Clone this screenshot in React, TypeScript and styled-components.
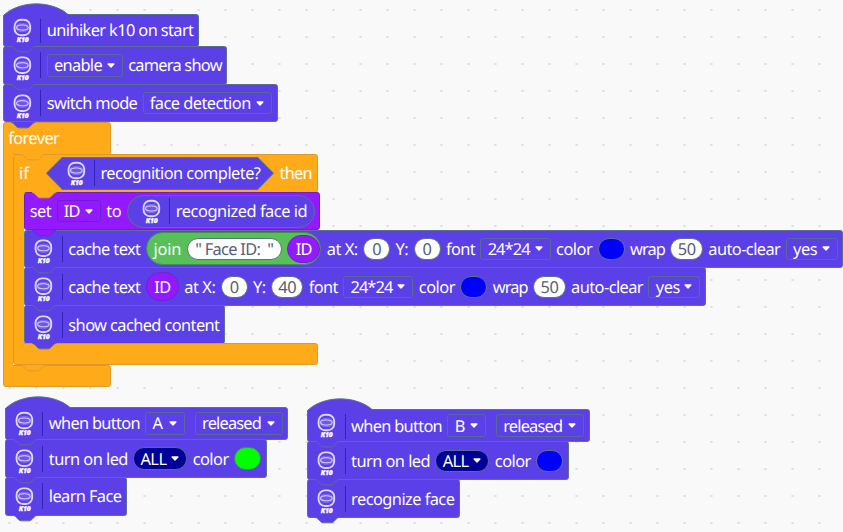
import React, { useLayoutEffect, useRef, useState } from "react";
import styled, { createGlobalStyle } from "styled-components";

const BLUE = "#5b40e8";
const BLUE_LINE = "#5c6f8f";
const ORANGE = "#ffab19";
const ORANGE_LINE = "#dd9a2c";
const PURPLE = "#931aff";
const PURPLE_LINE = "#6d22c9";

const GlobalStyle = createGlobalStyle`
  body { margin: 0; background: #f9f9f9; overflow: hidden; }
`;

const Workspace = styled.main`
  position: relative;
  width: 843px;
  height: 532px;
  overflow: hidden;
  font: 16.4px/22px "Noto Sans", "Open Sans", sans-serif;
  text-rendering: geometricPrecision;
  color: #fff;
  background-color: #f9f9f9;
  background-size: 27px 27px;
  background-image: radial-gradient(circle at 9.5px 10px, #dedede 0.9px, transparent 1.4px);
`;

const Stack = styled.section<{ $x: number; $y: number }>`
  position: absolute;
  left: ${(p) => p.$x}px;
  top: ${(p) => p.$y}px;
  display: flex;
  flex-direction: column;
  align-items: flex-start;
`;

const Body = styled.div<{ $h: number; $fill: string; $line: string; $w?: number }>`
  position: relative;
  box-sizing: border-box;
  display: flex;
  align-items: center;
  gap: 5.4px;
  height: ${(p) => p.$h + 0.8}px;
  margin-bottom: -0.8px;
  width: ${(p) => (p.$w ? p.$w + "px" : "max-content")};
  padding: 0 4.6px;
  border: 1px solid ${(p) => p.$line};
  border-radius: 2.7px;
  background: ${(p) => p.$fill};
`;

const NotchSvg = styled.svg<{ $bottom?: boolean; $left?: number }>`
  position: absolute;
  left: ${(p) => 7.1 + (p.$left ?? 0)}px;
  ${(p) => (p.$bottom ? "bottom: -6.9px;" : "top: -1.1px;")}
  overflow: visible;
`;

const HatSvg = styled.svg`
  position: absolute;
  left: -1px;
  top: -12.2px;
  overflow: visible;
`;

function Notch({ fill, line, bottom, left }: { fill: string; line: string; bottom?: boolean; left?: number }) {
  return (
    <NotchSvg $bottom={bottom} $left={left} width="24.3" height="6.4" viewBox="0 -0.7 36 9.5">
      <path
        d="M0 -0.8V0c2 0 3 1 4 2l4 4c1 1 2 2 4 2h12c2 0 3-1 4-2l4-4c1-1 2-2 4-2V-0.8z"
        fill={fill}
      />
      <path
        d="M0 0c2 0 3 1 4 2l4 4c1 1 2 2 4 2h12c2 0 3-1 4-2l4-4c1-1 2-2 4-2"
        fill="none"
        stroke={line}
        strokeWidth="1.4"
      />
    </NotchSvg>
  );
}

function Hat() {
  return (
    <HatSvg width="66" height="16" viewBox="0 0 66 16">
      <path d="M0.5 16V12.5C17 -2.9 48.5 -2.9 65.3 11.7V16z" fill={BLUE} />
      <path d="M0.5 16V12.5C17 -2.9 48.5 -2.9 65.3 11.7" fill="none" stroke={BLUE_LINE} />
    </HatSvg>
  );
}

const IconCell = styled.span<{ $lead: number; $tail: number; $drop: number }>`
  display: flex;
  align-items: center;
  align-self: center;
  height: 26px;
  padding-left: ${(p) => p.$lead}px;
  padding-right: ${(p) => p.$tail}px;
  border-right: 1px solid #3222b8;
  svg {
    display: block;
    transform: translateY(${(p) => p.$drop}px);
  }
`;

function Icon({ lead = 4.6, tail = 8.6, drop = 3 }: { lead?: number; tail?: number; drop?: number }) {
  return (
    <IconCell $lead={lead} $tail={tail} $drop={drop}>
      <svg width="19" height="25" viewBox="0 0 19 25">
        <rect x="1.6" y="1.4" width="15.6" height="15.6" rx="6.4" fill="none" stroke="#dcd7fc" strokeWidth="1.9" />
        <ellipse cx="9.4" cy="9.2" rx="5.8" ry="2.6" fill="#6f57ec" stroke="#c9c1fa" strokeWidth="1.3" />
        <path d="M3 7.8c1.5-3.4 11.300-3.4 12.800 0M3 10.600c1.500 3.600 11.300 3.600 12.800 0" fill="none" stroke="#8f7ef1" strokeWidth="0.8" />
        <text x="9.7" y="24" textAnchor="middle" fontFamily="Open Sans, sans-serif" fontStyle="italic" fontWeight="800" fontSize="6.7" textLength="11.8" fill="#fff" stroke="#fff" strokeWidth="0.25">K10</text>
      </svg>
    </IconCell>
  );
}

const LabelBox = styled.span<{ $w: number; $tail: number }>`
  flex: none;
  width: ${(p) => p.$w}px;
  margin-right: ${(p) => p.$tail}px;
  white-space: pre;
  transform: translateY(-0.3px);
`;

/** Text whose tracking is adjusted so that it fills the width given. */
function Label({ children, w, tail = 0 }: { children: string; w: number; tail?: number }) {
  const ref = useRef<HTMLSpanElement>(null);
  const [tracking, setTracking] = useState(0);
  useLayoutEffect(() => {
    if (ref.current) setTracking((w - ref.current.getBoundingClientRect().width) / children.length);
  }, [children, w]);
  return (
    <LabelBox $w={w} $tail={tail}>
      <span ref={ref} style={{ letterSpacing: `${tracking}px` }}>{children}</span>
    </LabelBox>
  );
}

const FieldBox = styled.span<{ $w: number; $line: string; $fill?: string; $round?: boolean }>`
  box-sizing: border-box;
  flex: none;
  display: flex;
  align-items: center;
  justify-content: space-between;
  width: ${(p) => p.$w}px;
  height: 22.4px;
  padding: 0 7px 0 6.2px;
  border: 1px solid ${(p) => p.$line};
  border-radius: ${(p) => (p.$round ? 11.2 : 2.7)}px;
  background: ${(p) => p.$fill ?? "transparent"};
`;

interface FieldProps { w: number; tw: number; children: string; line?: string; fill?: string; round?: boolean }

function Field({ w, tw, children, line = "#596b93", fill, round }: FieldProps) {
  return (
    <FieldBox $w={w} $line={line} $fill={fill} $round={round}>
      <Label w={tw}>{children}</Label>
      <svg width="8" height="5" viewBox="0 0 8 5">
        <path d="M1.1 1h5.8L4 4z" fill="#fff" stroke="#fff" strokeWidth="1.3" strokeLinejoin="round" />
      </svg>
    </FieldBox>
  );
}

const FieldSpacer = styled.span`
  flex: none;
  width: 0;
  margin-right: -0.8px;
`;

const Pill = styled.span<{ $w: number; $h?: number; $fill?: string; $line?: string; $end?: boolean }>`
  box-sizing: border-box;
  flex: none;
  display: flex;
  align-items: center;
  justify-content: ${(p) => (p.$end ? "flex-end" : "center")};
  gap: 5.4px;
  width: ${(p) => p.$w}px;
  height: ${(p) => p.$h ?? 22.4}px;
  border: 1px solid ${(p) => p.$line ?? "#5c7386"};
  border-radius: 17px;
  color: ${(p) => (p.$fill ? "#fff" : "#575e75")};
  background: ${(p) => p.$fill ?? "#fff"};
`;

const Hexagon = styled.span`
  position: relative;
  isolation: isolate;
  box-sizing: border-box;
  display: flex;
  flex: none;
  align-items: center;
  gap: 5.4px;
  width: 228.2px;
  height: 33.4px;
  padding-left: 20.8px;
  background: #5c6f8f;
  clip-path: polygon(0 50%, 16.4px 0, calc(100% - 16.4px) 0, 100% 50%, calc(100% - 16.4px) 100%, 16.4px 100%);
  &::before {
    content: "";
    position: absolute;
    inset: 1px 1.3px;
    z-index: -1;
    background: ${BLUE};
    clip-path: polygon(0 50%, 15.6px 0, calc(100% - 15.6px) 0, 100% 50%, calc(100% - 15.6px) 100%, 15.6px 100%);
  }
`;

const Wrap = styled.div`
  display: flex;
  flex-direction: column;
  align-items: flex-start;
`;

const Mouth = styled.div`
  display: flex;
  align-items: stretch;
`;

const Spine = styled.div`
  box-sizing: border-box;
  position: relative;
  z-index: 1;
  flex: none;
  width: 10.8px;
  margin: -3px 0;
  border-left: 1px solid ${ORANGE_LINE};
  background: ${ORANGE};
`;

interface BlockProps {
  children?: React.ReactNode;
  h?: number;
  w?: number;
  kind?: "blue" | "purple" | "orange";
  above?: "blue" | "purple" | "orange";
  notchLeft?: number;
  hat?: boolean;
  tail?: boolean;
}

const FILL = { blue: BLUE, purple: PURPLE, orange: ORANGE };
const LINE = { blue: BLUE_LINE, purple: PURPLE_LINE, orange: ORANGE_LINE };

function Block({ children, h = 37.8, w, kind = "blue", above, notchLeft, hat, tail }: BlockProps) {
  return (
    <Body $h={h} $w={w} $fill={FILL[kind]} $line={LINE[kind]}>
      {hat && <Hat />}
      {above && <Notch fill={FILL[above]} line={LINE[above]} left={notchLeft} />}
      {children}
      {tail && <Notch fill={FILL[kind]} line={LINE[kind]} bottom />}
    </Body>
  );
}

function CacheTail({ y, yw }: { y: string; yw: number }) {
  return (
    <>
      <Label w={31}>at X:</Label>
      <Pill $w={27}><Label w={9}>0</Label></Pill>
      <Label w={12.6}>Y:</Label>
      <Pill $w={yw}><Label w={y.length * 9}>{y}</Label></Pill>
      <Label w={29.2}>font</Label>
      <Field w={70.2} tw={42}>24*24</Field>
      <Label w={36.2}>color</Label>
      <Pill $w={27} $fill="#0000ff" />
      <Label w={35}>wrap</Label>
      <Pill $w={32.5}><Label w={18}>50</Label></Pill>
      <Label w={72}>auto-clear</Label>
      <Field w={52} tw={24.5}>yes</Field>
    </>
  );
}

function VariableId() {
  return <Pill $w={33.2} $h={28.8} $fill={PURPLE} $line={PURPLE_LINE}><Label w={16}>ID</Label></Pill>;
}

interface ButtonStackProps { x: number; y: number; button: string; bw: number; led: string; action: string; aw: number }

function ButtonStack({ x, y, button, bw, led, action, aw }: ButtonStackProps) {
  return (
    <Stack $x={x} $y={y}>
      <Block h={32.4} hat>
        <Icon drop={0.3} />
        <Label w={91}>when button</Label>
        <Field w={bw} tw={bw - 29}>{button}</Field>
        <FieldSpacer />
        <Field w={88} tw={59}>released</Field>
      </Block>
      <Block above="blue">
        <Icon />
        <Label w={79}>turn on led</Label>
        <Field w={54} tw={26} fill="#000099" round>ALL</Field>
        <Label w={36}>color</Label>
        <Pill $w={27} $fill={led} />
      </Block>
      <Block above="blue" tail>
        <Icon />
        <Label w={aw}>{action}</Label>
      </Block>
    </Stack>
  );
}

export default function App() {
  return (
    <>
      <GlobalStyle />
      <Workspace>
        <Stack $x={2.6} $y={13.7}>
          <Block h={32.4} hat>
            <Icon drop={0.3} />
            <Label w={146.6}>unihiker k10 on start</Label>
          </Block>
          <Block above="blue">
            <Icon />
            <Field w={76} tw={48}>enable</Field>
            <Label w={93.6}>camera show</Label>
          </Block>
          <Block above="blue">
            <Icon />
            <Label w={90.4}>switch mode</Label>
            <Field w={129.6} tw={101}>face detection</Field>
          </Block>
          <Wrap>
            <Block kind="orange" above="blue" h={32.4} w={108.5}>
              <Label w={51}>forever</Label>
            </Block>
            <Mouth>
              <Spine />
              <Wrap>
                <Block kind="orange" above="orange" w={304.3}>
                  <Label w={10} tail={11.5}>if</Label>
                  <Hexagon>
                    <Icon lead={0} tail={8.4} drop={0.3} />
                    <Label w={160}>recognition complete?</Label>
                  </Hexagon>
                  <Label w={32.5}>then</Label>
                </Block>
                <Mouth>
                  <Spine />
                  <Wrap>
                    <Block kind="purple" above="orange">
                      <Label w={21.4}>set</Label>
                      <Field w={44.3} tw={16} line={PURPLE_LINE}>ID</Field>
                      <Label w={15}>to</Label>
                      <Pill $w={188} $h={33} $fill={BLUE} $end>
                        <Icon lead={0} tail={8.6} drop={0.3} />
                        <Label w={131.5} tail={6.4}>recognized face id</Label>
                      </Pill>
                    </Block>
                    <Block above="purple">
                      <Icon />
                      <Label w={72}>cache text</Label>
                      <Pill $w={175.6} $h={33} $fill="#59c059" $line="#468c56" $end>
                        <Label w={28}>join</Label>
                        <Pill $w={95}><Label w={78}>{'" Face ID:  "'}</Label></Pill>
                        <VariableId />
                      </Pill>
                      <CacheTail y="0" yw={27} />
                    </Block>
                    <Block above="blue">
                      <Icon />
                      <Label w={72}>cache text</Label>
                      <VariableId />
                      <CacheTail y="40" yw={32.2} />
                    </Block>
                    <Block above="blue">
                      <Icon />
                      <Label w={151}>show cached content</Label>
                    </Block>
                  </Wrap>
                </Mouth>
                <Block kind="orange" above="blue" notchLeft={10.8} h={21.6} w={304.3} />
              </Wrap>
            </Mouth>
            <Block kind="orange" above="orange" notchLeft={10.8} h={21.6} w={108.5} />
          </Wrap>
        </Stack>
        <ButtonStack x={4.7} y={406.9} button="A" bw={39.6} led="#00ff00" action="learn Face" aw={72.4} />
        <ButtonStack x={306.9} y={409.1} button="B" bw={38.6} led="#0000ff" action="recognize face" aw={103.3} />
      </Workspace>
    </>
  );
}
